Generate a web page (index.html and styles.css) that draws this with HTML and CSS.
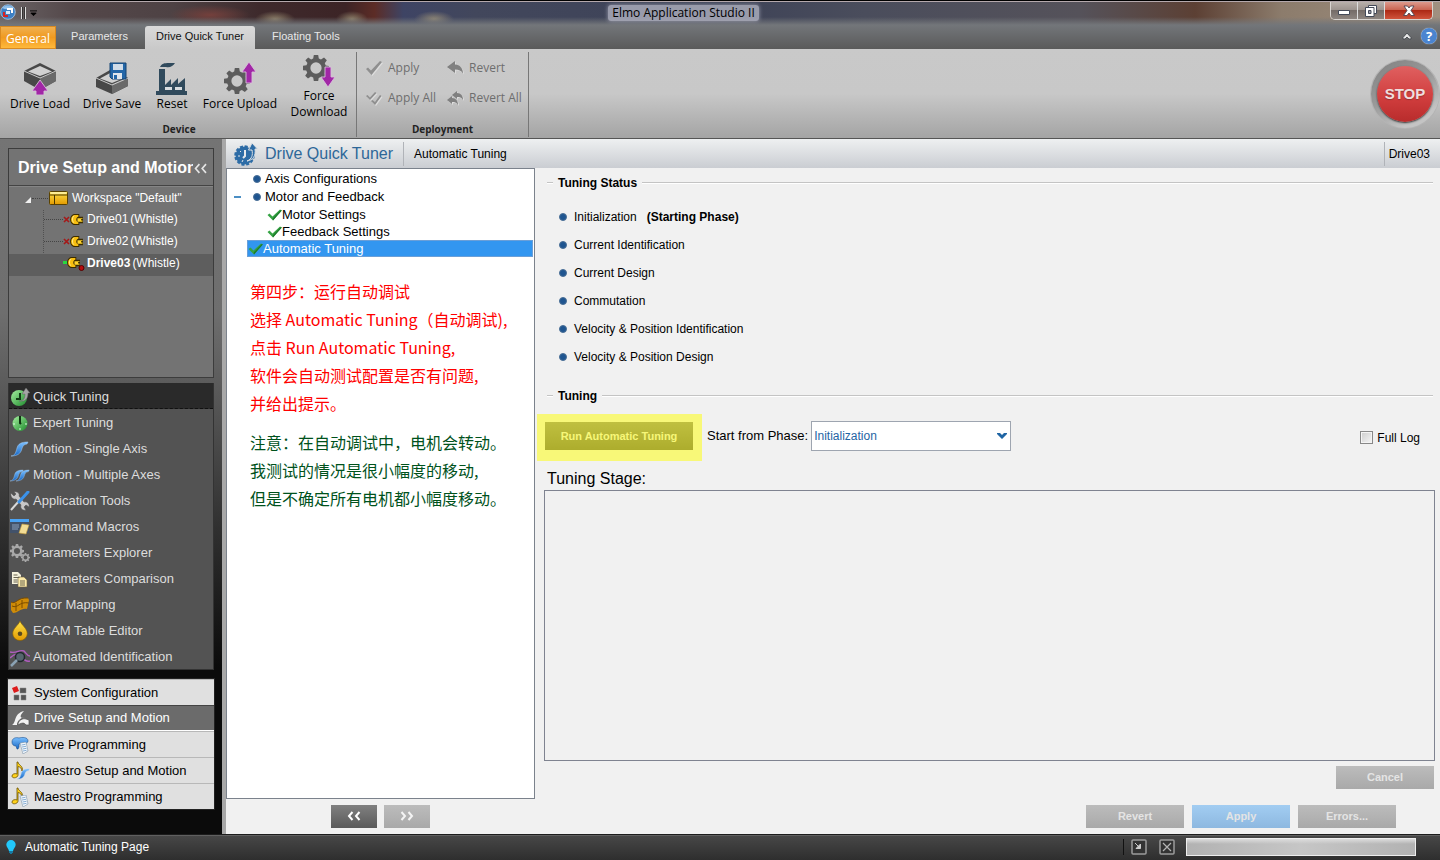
FILE: index.html
```html
<!DOCTYPE html>
<html lang="en">
<head>
<meta charset="utf-8">
<title>Elmo Application Studio II</title>
<link rel="stylesheet" href="styles.css">
</head>
<body>
<svg class="defs" aria-hidden="true">
  <defs>
    <linearGradient id="g-gold" x1="0" y1="0" x2="0" y2="1"><stop offset="0" stop-color="#ffe34a"/><stop offset="1" stop-color="#e39a00"/></linearGradient>
    <linearGradient id="g-green" x1="0" y1="0" x2="1" y2="1"><stop offset="0" stop-color="#a6f0a0"/><stop offset="1" stop-color="#1d8a2c"/></linearGradient>
    <linearGradient id="g-blue" x1="0" y1="0" x2="0" y2="1"><stop offset="0" stop-color="#7cc0ff"/><stop offset="1" stop-color="#1767c4"/></linearGradient>
    <symbol id="gear" viewBox="0 0 24 24">
      <path fill-rule="evenodd" d="M10 0h4l.6 3.200 2 .9L19.400 2.200l2.600 2.600-1.900 2.700.9 2.200 3 .5v4l-3.100.6-.9 2.100 1.900 2.600-2.700 2.700-2.700-1.900-2 .9L14 24h-4l-.6-3.200-2.100-.9-2.700 1.900-2.600-2.700 1.900-2.700-.9-2.100L0 14v-4l3.200-.5.9-2.200L2.200 4.800l2.600-2.600 2.700 1.900 1.900-.9zM12 6.800a5.200 5.200 0 1 0 0 10.400 5.200 5.200 0 0 0 0-10.400z"/>
    </symbol>
    <symbol id="tick" viewBox="0 0 15 13"><path d="M0.500 7L2.500 5.500 5.500 8.500 13 1.500 14.800 2.500 6 12.500z" fill="#35a343"/><path d="M6 12.500L14.800 2.500 13.800 2 5.700 10.500z" fill="#1c7c2c"/></symbol>
    <symbol id="plug" viewBox="0 0 15 12"><path d="M5 0h5v3h4v7h-4v2H5C2 12 0 9 0 6s2-6 5-6z" fill="#3c2c00"/><path d="M5.500 1H9v2C6 3.500 6 8.500 9 9v2H5.500C3 11 1 9 1 6s2-5 4.500-5z" fill="#f8bf10"/><path d="M4.500 2C2 3 2 8 4 9.500" fill="none" stroke="#fff0a0"/><path d="M8 4.500h5.500v1H12v1.500h1.500v1.500H8z" fill="#ffd42a"/></symbol>
    <symbol id="note" viewBox="0 0 20 20"><path d="M7 1l1 0c0 3 6 4 4 9-.2-3-2-4-4-4.500V14c0 3-6 4-6 1 0-2 3-3 5-2z" fill="#ffd21c" stroke="#6d5300" stroke-width=".8"/></symbol>
    <symbol id="sheet" viewBox="0 0 10 12"><path d="M1 1l6-1 2 9-5 3z" fill="#f4f8fc" stroke="#7c93aa" stroke-width=".6"/><path d="M2.500 3l4-.7M3 5l4-.7M3.500 7l4-.7M4 9l3.500-.7" stroke="#6c9bc9" stroke-width=".8"/></symbol>
    <symbol id="curve" viewBox="0 0 18 16"><path d="M0 15c4 0 5-4 6-8s4-6 11-6l-1 2c-4 .5-4.500 3-5.500 6S7 15 0 15z" fill="url(#g-blue)" stroke="#a8d0f8" stroke-width=".5"/></symbol>
  </defs>
</svg>

<header class="chrome">
  <div class="titlebar">
    <svg class="app-icon" viewBox="0 0 16 16"><circle cx="8" cy="8" r="7.300" fill="#3c7fc4" stroke="#b9d6f2" stroke-width=".7"/><path d="M2 4a7 5 0 0 1 12 0 8 4 0 0 1-12 0z" fill="#8fbfe9"/><path d="M7 4h6v5h-2V6H7z" fill="#fff"/><path d="M3 8h2v3h3v2H3z" fill="#d32424"/><path d="M6 7h4v3H6z" fill="#d6e7f7"/></svg>
    <span class="grip"></span>
    <svg class="quick-arrow" viewBox="0 0 8 7"><path d="M0 .5h8M1 3h6L4 6z" stroke="#000" stroke-width="1"/></svg>
    <h1 class="app-title">Elmo Application Studio II</h1>
    <div class="window-buttons">
      <button class="win" aria-label="Minimize"><svg viewBox="0 0 14 12"><path d="M1.500 5.500h11v4h-11z" fill="#fff" stroke="#444a58"/></svg></button>
      <button class="win" aria-label="Restore"><svg viewBox="0 0 14 12"><path d="M4.500.5h8v8h-8z" fill="#fff" stroke="#444a58"/><path d="M1.500 2.500h8.500v9H1.500z" fill="#fff" stroke="#444a58"/><path d="M4.500 5.500h2.500v3H4.500z" fill="#99a" stroke="#444a58"/></svg></button>
      <button class="win win-close" aria-label="Close"><svg viewBox="0 0 14 12"><path d="M2 1h3.500L7 3l1.500-2H12L9 5.500l3.500 5H9L7 8l-2 2.500H1.500l3.500-5z" fill="#fff" stroke="#4c4450" stroke-width=".9"/></svg></button>
    </div>
  </div>
  <nav class="tabs">
    <button class="tab tab-general">General</button>
    <button class="tab tab-params">Parameters</button>
    <button class="tab tab-active">Drive Quick Tuner</button>
    <button class="tab">Floating Tools</button>
    <div class="tabs-right">
      <button class="mini" aria-label="Collapse ribbon"><svg viewBox="0 0 10 8"><path d="M1 5.500L5 1l4 4.500v1.500H7L5 5 3 7H1z" fill="#e8e8e8" stroke="#44484e" stroke-width=".9"/></svg></button>
      <button class="help" aria-label="Help">?</button>
    </div>
  </nav>
</header>

<section class="ribbon">
  <div class="group">
    <div class="tools">
      <button class="tool">
        <svg viewBox="0 0 34 34"><path d="M1 10L17 2l16 8v10l-16 9L1 20z" fill="#484848"/><path d="M17 17l16-6v9l-16 9z" fill="#6a6a6a"/><path d="M5 10.500L17 5l12 5.500L17 15z" fill="#d0d0d0"/><path d="M1 10l16 7 16-7" fill="none" stroke="#e8e8e8" stroke-width=".8"/><path d="M17 19l8 11h-4v4h-8v-4H9z" fill="#a127a6" stroke="#d8c0da" stroke-width=".9"/></svg>
        <span>Drive Load</span></button>
      <button class="tool">
        <svg viewBox="0 0 34 34"><path d="M1 17L15 9l18 8v8l-16 8L1 26z" fill="#484848"/><path d="M17 23l16-7v9l-16 8z" fill="#6a6a6a"/><path d="M5 17.500L17 11l12 6-12 5z" fill="#d0d0d0"/><path d="M1 17l16 7 16-7" fill="none" stroke="#e8e8e8" stroke-width=".8"/><path d="M15 2h16v16H17l-2-2z" fill="#2467a8" stroke="#174572"/><path d="M18 3h10v6H18z" fill="#d0dce8"/><path d="M18 12h9v6h-9z" fill="#e0e6ec"/><path d="M19 14h3v4h-3z" fill="#2467a8"/></svg>
        <span>Drive Save</span></button>
      <button class="tool tool-s">
        <svg viewBox="0 0 34 34"><path d="M4 8h6v16l6-6v6l7-7v6l7-6v13h2v4H1v-4h3z" fill="#304a5c"/><path d="M5 6c2-5 7-4 15-4-2 3-5 5-9 4z" fill="#304a5c"/><path d="M10 26h7v3h-7zM20 26h7v3h-7z" fill="#d8dde0"/></svg>
        <span>Reset</span></button>
      <button class="tool tool-l">
        <svg viewBox="0 0 34 34"><use href="#gear" x="1" y="7" width="26" height="26" fill="#5c5c5c"/><path d="M26 1l7 10h-4v11h-6V11h-4z" fill="#a127a6" stroke="#d8c0da" stroke-width=".9"/></svg>
        <span>Force Upload</span></button>
      <button class="tool tool-tall">
        <svg viewBox="0 0 34 34"><use href="#gear" x="1" y="1" width="26" height="26" fill="#5c5c5c"/><path d="M26 33l-7-10h4V13h6v10h4z" fill="#a127a6" stroke="#d8c0da" stroke-width=".9"/></svg>
        <span>Force Download</span></button>
    </div>
    <h2 class="group-name">Device</h2>
  </div>
  <div class="group group-deploy">
    <div class="actions">
      <button class="action" disabled><svg viewBox="0 0 16 16"><path d="M0 9l2-1.500 3 3L14 1l2 1L5.500 15z" fill="#8f8f8f"/></svg>Apply</button>
      <button class="action" disabled><svg viewBox="0 0 16 16"><path d="M0 7l8-6v3.500c5 0 8 4 8 9-2-3-4-4-8-4V13z" fill="#808080"/></svg>Revert</button>
      <button class="action" disabled><svg viewBox="0 0 16 16"><path d="M0 6l1.500-1L4 7.500 9 2l1.500 1L4 10z" fill="#8f8f8f"/><path d="M5 11l1.500-1L9 12l5-7 1.500 1L9 15z" fill="#8f8f8f"/></svg>Apply All</button>
      <button class="action" disabled><svg viewBox="0 0 16 16"><path d="M5 5l5-4v2c4 0 6 3 6 7-2-3-3-3-6-3v2z" fill="#808080"/><path d="M0 10l5-4v2c4 0 6 3 6 7-2-3-3-3-6-3v2z" fill="#808080"/></svg>Revert All</button>
    </div>
    <h2 class="group-name">Deployment</h2>
  </div>
  <button class="stop"><span>STOP</span></button>
</section>

<main class="body">
  <aside class="sidebar">
    <section class="devices">
      <header class="devices-head"><h2>Drive Setup and Motion</h2>
        <button class="mini" aria-label="Collapse panel"><svg viewBox="0 0 13 10"><path d="M5.500 1L2 5l3.500 4M11.500 1L8 5l3.500 4" fill="none" stroke="#e4e4e4" stroke-width="1.500"/></svg></button></header>
      <ul class="tree">
        <li>
          <div class="node root"><svg class="expander" viewBox="0 0 6 6"><path d="M6 0v6H0z" fill="#f0f0f0"/></svg><i class="dots"></i>
            <svg class="folder" viewBox="0 0 19 14"><rect x=".5" y=".5" width="18" height="13" rx="1" fill="url(#g-gold)" stroke="#5a4200"/><path d="M1 4h17M5.500 4v9" stroke="#4a3600" stroke-width="1"/><path d="M1.500 2h16" stroke="#fff4b0" stroke-width="1.500"/></svg>Workspace "Default"</div>
          <ul>
            <li class="node leaf"><i class="dots"></i><svg class="drive" viewBox="0 0 22 16"><path d="M1 6l5 5M6 6l-5 5" stroke="#a61818" stroke-width="1.600"/><use href="#plug" x="7" y="3" width="14" height="11"/></svg><span>Drive01</span><span class="kind">(Whistle)</span></li>
            <li class="node leaf"><i class="dots"></i><svg class="drive" viewBox="0 0 22 16"><path d="M1 6l5 5M6 6l-5 5" stroke="#a61818" stroke-width="1.600"/><use href="#plug" x="7" y="3" width="14" height="11"/></svg><span>Drive02</span><span class="kind">(Whistle)</span></li>
            <li class="node leaf chosen"><svg class="drive" viewBox="0 0 22 16"><path d="M0 6h4v3H0z" fill="#28d840"/><use href="#plug" x="4" y="2" width="14" height="11"/><circle cx="18.500" cy="13" r="2.500" fill="#b80c0c" stroke="#500"/></svg><b>Drive03</b><span class="kind">(Whistle)</span></li>
          </ul>
        </li>
      </ul>
    </section>

    <nav class="tools-nav">
      <a href="#" class="on"><svg viewBox="0 0 20 20"><circle cx="9" cy="11" r="8" fill="url(#g-green)"/><path d="M10 6v6H6" stroke="#123d14" stroke-width="2" fill="none"/><path d="M9 14c5 0 6-3 6-7h-3l4-6 4 5h-2c0 6-3 9-9 8z" fill="#a5a5a5" stroke="#666" stroke-width=".5"/></svg>Quick Tuning</a>
      <a href="#"><svg viewBox="0 0 20 20"><circle cx="10" cy="10.500" r="7.500" fill="url(#g-green)"/><path d="M10 3v7l1 1" stroke="#0f3512" stroke-width="2" fill="none"/><path d="M3 11h2M15 11h2M10 15v2" stroke="#dfffe0"/></svg>Expert Tuning</a>
      <a href="#"><svg viewBox="0 0 20 20"><use href="#curve" x="1" y="2" width="18" height="16"/></svg>Motion - Single Axis</a>
      <a href="#"><svg viewBox="0 0 20 20"><use href="#curve" x="0" y="4" width="14" height="13"/><use href="#curve" x="6" y="4" width="14" height="13"/></svg>Motion - Multiple Axes</a>
      <a href="#"><svg viewBox="0 0 20 20"><path d="M1 2l3 3 2-2-2-2c4-1 6 2 5 4l5 6c3-1 6 2 5 5l-3-2-2 2 2 3c-4 1-6-2-5-5L6 8C3 9 0 6 1 2z" fill="#c8c8c8" stroke="#555" stroke-width=".6"/><path d="M1 19l8-9" stroke="#d8d8d8" stroke-width="2"/><path d="M9 11l9-10" stroke="#3b92ea" stroke-width="3" stroke-linecap="round"/></svg>Application Tools</a>
      <a href="#"><svg viewBox="0 0 20 20"><path d="M0 3h19v13H0z" fill="#42526a"/><path d="M0 2h19v3H0z" fill="#4aa3f4"/><path d="M2 8h7M2 10h7M2 12h6" stroke="#8ba0bc"/><path d="M12 7l7 1-3 9-7-1z" fill="#f2dc94" stroke="#c49a3c" stroke-width=".6"/></svg>Command Macros</a>
      <a href="#"><svg viewBox="0 0 20 20"><use href="#gear" x="0" y="1" width="14" height="14" fill="#a8a8a8"/><use href="#gear" x="11" y="10" width="9" height="9" fill="#a8a8a8"/></svg>Parameters Explorer</a>
      <a href="#"><svg viewBox="0 0 20 20"><path d="M2 3h6l3 3v9H2z" fill="#f6f2dc"/><path d="M8 8h6l3 3v7H8z" fill="#fbe9a8" stroke="#6b6040" stroke-width=".6"/><path d="M3.500 6h4M3.500 8.500h6M3.500 11h4M3.500 13h4M10 12h5M10 14h5M10 16h5" stroke="#6a6450"/></svg>Parameters Comparison</a>
      <a href="#"><svg viewBox="0 0 20 20"><path d="M1 7c5 3 6-5 17-4l1 2-2 9c-7-1-8 4-14 4l-2-3z" fill="#cf8c08"/><path d="M1 7c5 3 6-5 17-4M2 11c6 3 7-5 17-3M6 8v8M12 5v8" stroke="#7a4c00" fill="none"/></svg>Error Mapping</a>
      <a href="#"><svg viewBox="0 0 20 22"><path d="M10 0c2 5 8 8 8 14a8 7.500 0 0 1-16 0C2 8 8 5 10 0z" fill="url(#g-gold)" stroke="#8a6000" stroke-width=".7"/><circle cx="10" cy="14" r="2.500" fill="#5a4a20"/></svg>ECAM Table Editor</a>
      <a href="#"><svg viewBox="0 0 20 20"><path d="M0 5c7 2 9-3 14-1 2 2 3 5 6 5M0 11c5-5 9-5 12-1s5 5 8 4" stroke="#b05cc0" stroke-width="1.400" fill="none"/><circle cx="10" cy="10" r="4.500" fill="#56656e" stroke="#20282c" stroke-width="1.500"/><path d="M7 13l-6 6" stroke="#8ba2b4" stroke-width="2.500"/></svg>Automated Identification</a>
    </nav>

    <nav class="areas">
      <a href="#"><svg viewBox="0 0 20 20"><path d="M10 5h6v5h-6zM4 12h5v5H4zM11 12h5v5h-5z" fill="#555" stroke="#888" stroke-width=".5"/><path d="M2 5l5-2 2 5-5 2z" fill="#dd1c1c"/></svg>System Configuration</a>
      <a href="#" class="on"><svg viewBox="0 0 20 20"><path d="M2 17C7 14 3 6 14 3c-4 4-4 6-2 7l3-1c-5 1-8 4-8 8z" fill="#f2f2f2"/><path d="M8 17c0-5 5-7 8-6l3 1v5h-3c-2-3-5-2-8 0z" fill="#f2f2f2" stroke="#555" stroke-width=".7"/></svg>Drive Setup and Motion</a>
      <a href="#"><svg viewBox="0 0 20 20"><path d="M2 7c0-4 4-5 7-4 3-1 9-1 9 3 0 2-3 3-5 2L9 9v3l-1 2H7l-1-3C3 11 2 9 2 7z" fill="url(#g-blue)" stroke="#174f90" stroke-width=".6"/><use href="#sheet" x="9" y="7" width="10" height="12"/></svg>Drive Programming</a>
      <a href="#"><svg viewBox="0 0 20 20"><use href="#note" width="20" height="20"/><use href="#curve" x="7" y="7" width="13" height="12"/></svg>Maestro Setup and Motion</a>
      <a href="#"><svg viewBox="0 0 20 20"><use href="#note" width="20" height="20"/><use href="#sheet" x="9" y="8" width="10" height="12"/></svg>Maestro Programming</a>
    </nav>
  </aside>

  <section class="page">
    <header class="page-head">
      <svg class="page-icon" viewBox="0 0 24 24"><circle cx="10.500" cy="13.500" r="9" fill="#2d6ca6"/><circle cx="10.500" cy="13.500" r="9" fill="none" stroke="#2d6ca6" stroke-width="2.500" stroke-dasharray="3 1.700"/><path d="M11 8v6l-2 2" stroke="#e4e8ec" stroke-width="2" fill="none"/><path d="M4 14h2M8 20l1-2M6 9l1 1" stroke="#e4e8ec"/><path d="M13 19c5-2 6-6 5-11h-3.500L18 1l5.500 6H21c1 7-2 11-8 12z" fill="#2d6ca6" stroke="#dde0e4" stroke-width="1"/></svg>
      <h2>Drive Quick Tuner</h2>
      <span class="crumb">Automatic Tuning</span>
      <span class="target">Drive03</span>
    </header>
    <div class="columns">
      <div class="steps-col">
        <div class="steps">
          <ul class="step-tree">
            <li class="step"><i class="bullet"></i>Axis Configurations</li>
            <li class="step open"><i class="bullet"></i>Motor and Feedback</li>
            <li class="step sub"><svg viewBox="0 0 15 13"><use href="#tick"/></svg>Motor Settings</li>
            <li class="step sub"><svg viewBox="0 0 15 13"><use href="#tick"/></svg>Feedback Settings</li>
            <li class="step current"><svg viewBox="0 0 15 13"><use href="#tick"/></svg>Automatic Tuning</li>
          </ul>
          <div class="notes" lang="zh-CN">
            <p class="note-red">第四步：运行自动调试<br>选择 Automatic Tuning（自动调试),<br>点击 Run Automatic Tuning,<br>软件会自动测试配置是否有问题,<br>并给出提示。</p>
            <p class="note-green">注意：在自动调试中，电机会转动。<br>我测试的情况是很小幅度的移动,<br>但是不确定所有电机都小幅度移动。</p>
          </div>
        </div>
        <div class="pager">
          <button class="btn btn-dark" aria-label="Previous step"><svg viewBox="0 0 14 10"><path d="M5.500 1L2 5l3.500 4M12.500 1L9 5l3.500 4" fill="none" stroke="#fff" stroke-width="2"/></svg></button>
          <button class="btn" aria-label="Next step" disabled><svg viewBox="0 0 14 10"><path d="M1.500 1L5 5 1.500 9M8.500 1L12 5 8.500 9" fill="none" stroke="#f4f4f4" stroke-width="2"/></svg></button>
        </div>
      </div>
      <div class="work">
        <h3 class="rule">Tuning Status</h3>
        <ul class="phases">
          <li><i class="bullet"></i>Initialization <b>(Starting Phase)</b></li>
          <li><i class="bullet"></i>Current Identification</li>
          <li><i class="bullet"></i>Current Design</li>
          <li><i class="bullet"></i>Commutation</li>
          <li><i class="bullet"></i>Velocity &amp; Position Identification</li>
          <li><i class="bullet"></i>Velocity &amp; Position Design</li>
        </ul>
        <h3 class="rule">Tuning</h3>
        <div class="run-row">
          <span class="marked"><button class="btn btn-dark btn-run">Run Automatic Tuning</button></span>
          <label for="phase">Start from Phase:</label>
          <span class="select"><select id="phase"><option>Initialization</option></select><svg viewBox="0 0 10 6"><path d="M0 0h3l2 2 2-2h3v1L5 6 0 1z" fill="#1f65a4"/></svg></span>
          <label class="full-log"><input type="checkbox">Full Log</label>
        </div>
        <h3 class="stage-title" id="stage">Tuning Stage:</h3>
        <div class="stage" role="log" aria-labelledby="stage"></div>
        <div class="cancel-row"><button class="btn" disabled>Cancel</button></div>
        <div class="foot-row">
          <button class="btn" disabled>Revert</button>
          <button class="btn btn-blue" disabled>Apply</button>
          <button class="btn" disabled>Errors...</button>
        </div>
      </div>
    </div>
  </section>
</main>

<footer class="status">
  <svg class="bulb" viewBox="0 0 10 14"><path d="M5 0a4.700 4.700 0 0 1 4.700 4.700C9.700 7 7.500 8.500 7 11H3C2.500 8.500.3 7 .3 4.700A4.700 4.700 0 0 1 5 0z" fill="#22c8fa"/><path d="M3 11h4v2H6v1H4v-1H3z" fill="#1878a0"/></svg>
  <span class="status-text">Automatic Tuning Page</span>
  <button class="mini" aria-label="Pop out"><svg viewBox="0 0 16 16"><rect x="1" y="1" width="14" height="14" rx="1" fill="#333" stroke="#9c9c9c" stroke-width="1.500"/><path d="M4 4l4 4M9.500 5v4.500H5z" stroke="#ccc" fill="#ccc"/></svg></button>
  <button class="mini" aria-label="Clear"><svg viewBox="0 0 16 16"><rect x="1" y="1" width="14" height="14" rx="1" fill="#333" stroke="#9c9c9c" stroke-width="1.500"/><path d="M4 4l8 8M12 4l-8 8" stroke="#b4b4b4" stroke-width="1.200"/></svg></button>
  <div class="progress" role="progressbar" aria-label="Progress"></div>
</footer>
</body>
</html>
```

FILE: styles.css
```css
* { box-sizing: border-box; }
body { margin: 0; min-height: 100vh; display: flex; flex-direction: column; font: 12px/16px "Liberation Sans", Arial, sans-serif; color: #000; background: #f1f1f1; }
h1, h2, h3, p, ul { margin: 0; padding: 0; font-weight: normal; }
ul { list-style: none; }
button { font: inherit; color: inherit; border: 0; padding: 0; background: none; }
a { color: inherit; text-decoration: none; }
svg { flex: none; display: block; }
.defs { position: absolute; width: 0; height: 0; }

/* Window frame */
.chrome {
  border-top: 1px solid #000;
  background:
    linear-gradient(#0000 0, #0000 16px, #73767a 24px, #5a5a5a 100%),
    radial-gradient(20px 8px at 275px 18px, #8a7c66, #0000),
    radial-gradient(16px 8px at 352px 18px, #8a7c66, #0000),
    radial-gradient(20px 8px at 434px 18px, #8c8474, #0000),
    radial-gradient(40px 10px at 210px 14px, #74403c, #0000),
    linear-gradient(90deg, #6a6466 0, #54484a 5%, #4e4244 12%, #3e2a2c 18%, #3c2426 24%, #5c2c26 26%, #3e4464 28%, #42475c 33%, #3d4257 50%, #4a4d5c 60%, #55525a 75%, #5c4034 83%, #8c7c6c 89%, #a09080 100%);
}
.titlebar { height: 24px; display: flex; align-items: flex-start; border-top: 1px solid #b4a8ac; padding-right: 7px; }
.app-icon { width: 16px; height: 16px; margin-top: 2px; }
.grip { width: 5px; height: 12px; margin: 5px 4px 0 5px; border: solid #ddd; border-width: 0 1px; background: linear-gradient(90deg, #333 1px, #0000 1px, #0000 2px, #333 2px); }
.quick-arrow { width: 7px; height: 7px; margin-top: 8px; }
.app-title { margin: 3px auto 0; padding: 0 4px; font: 12px/16px "Open Sans", "Noto Sans", sans-serif; border-radius: 3px; background: rgba(176, 178, 192, .8); box-shadow: 0 0 4px rgba(176, 178, 192, .8); }
.window-buttons { display: flex; border: 1px solid #d8d4d0; border-top: 0; border-radius: 0 0 5px 5px; overflow: hidden; }
.win { width: 27px; height: 17px; display: grid; place-items: center; border-right: 1px solid #ddd; background: linear-gradient(#b8b0aa, #9a918c 50%, #756c68 50%, #8d8580); }
.win svg { width: 14px; height: 12px; }
.win-close { width: 47px; border: 0; background: linear-gradient(#dd9a8c, #c8604c 50%, #ad2a16 50%, #d0543c); }
.tabs { height: 24px; display: flex; align-items: flex-end; }
.tab { height: 23px; padding: 0 17px; color: #e8e8e8; font-size: 11px; line-height: 20px; padding-bottom: 3px; }
.tab-general { width: 56px; padding: 3px 0 0; color: #fff; font: 12px/18px "Open Sans", "Noto Sans", sans-serif; border: 1px solid #d98a20; background: linear-gradient(#f0b050, #f09a20 50%, #ffb93c); }
.tab-params { width: 89px; padding-left: 0; padding-right: 2px; }
.tab-active { width: 110px; padding-left: 0; padding-right: 0; color: #111; border-radius: 3px 3px 0 0; background: linear-gradient(#dadada, #c9c9c9); }
.tabs-right { margin-left: auto; align-self: stretch; display: flex; align-items: center; gap: 9px; padding: 0 3px 3px 0; }
.tabs-right .mini svg { width: 10px; height: 8px; }
.help { width: 16px; height: 16px; border-radius: 50%; color: #fff; font: bold 13px/16px "Open Sans", sans-serif; background: #4a84d0; box-shadow: 0 0 1px #fff; text-align: center; }

/* Ribbon */
.ribbon { display: flex; height: 90px; border-bottom: 1px solid #555; background: linear-gradient(#c9c9c9 0, #c8c8c8 50%, #a4a4a4 100%); font-family: "Open Sans", "Noto Sans", sans-serif; }
.group { display: flex; flex-direction: column; justify-content: space-between; padding: 0 2px 1px 4px; border-right: 1px solid #777; margin: 3px 0 1px; }
.tools { display: flex; align-items: flex-start; margin-top: 2px; }
.tool { width: 72px; padding-top: 7px; line-height: 16px; display: flex; flex-direction: column; align-items: center; }
.tool svg { width: 34px; height: 34px; margin-bottom: 1px; }
.tool-s { width: 48px; }
.tool-l { width: 88px; }
.tool-tall { width: 70px; padding-top: 0; }
.tool-tall svg { margin-bottom: 0; }
.group-name { font-size: 10px; line-height: 14px; font-weight: bold; text-align: center; color: #222; }
.group .tools + .group-name { margin-top: -9px; }
.group-deploy { padding: 0 0 1px; width: 172px; }
.actions { display: grid; grid-template-columns: 81px 1fr; grid-auto-rows: 30px; padding-left: 9px; margin-top: 1px; }
.action { display: flex; align-items: center; gap: 6px; color: #6e6e6e; white-space: nowrap; }
.action svg { width: 16px; height: 16px; filter: drop-shadow(1px 1px 0 #ddd); }
.stop { width: 68px; height: 68px; margin: 11px 1px 0 auto; padding: 6px; border-radius: 50%; background: linear-gradient(150deg, #808080, #9a9a9a 45%, #c4c4c4 80%); box-shadow: 0 0 0 1px #b4b4b4; }
.stop span { display: block; border-radius: 50%; height: 56px; color: #f0dede; font: bold 15px/56px "Liberation Sans", Arial, sans-serif; background: linear-gradient(#e06060, #cf3c3c 60%, #b82c2c); box-shadow: 0 1px 2px #333; text-shadow: 0 1px 1px #933; }

/* Sidebar */
.body { flex: 1; display: flex; }
.sidebar { width: 226px; flex: none; padding: 9px 8px 25px; border-right: 4px solid #a8a8a8; display: flex; flex-direction: column; background: linear-gradient(#747474 0, #6e6e6e 25%, #5c5c5c 35%, #303030 56%, #0b0b0b 76%, #0b0b0b 100%); }
.devices { flex: 1; border: 1px solid #3c3c3c; background: #737373; margin-bottom: 5px; color: #fff; min-height: 130px; }
.devices-head { display: flex; align-items: center; height: 37px; border-bottom: 1px solid #444; box-shadow: 0 1px #858585; padding: 2px 5px 0 9px; }
.devices-head h2 { font: bold 16px/24px "Liberation Sans", Arial, sans-serif; flex: 1; overflow: hidden; white-space: nowrap; }
.devices-head .mini svg { width: 15px; height: 11px; }
.tree { padding-top: 2px; }
.tree ul { background: repeating-linear-gradient(#505050 0 1px, #0000 1px 2px) 34px 0 / 1px 44px no-repeat; }
.node { height: 22px; display: flex; align-items: center; padding-bottom: 2px; white-space: nowrap; }
.root { padding-left: 16px; gap: 1px; }
.expander { width: 6px; height: 6px; margin-top: 4px; }
.dots { width: 16px; border-top: 1px dotted #444; }
.folder { width: 19px; height: 14px; margin-right: 3px; }
.leaf { padding-left: 35px; padding-bottom: 4px; }
.leaf .dots { width: 19px; }
.drive { width: 22px; height: 16px; margin-right: 2px; }
.chosen { background: #5e5e5e; padding-left: 54px; }
.kind { margin-left: 2px; }
.tools-nav { border: 1px solid #333; border-top: 0; background: #535353; color: #ddd; }
.tools-nav a, .areas a { display: flex; align-items: center; height: 26px; gap: 4px; font-size: 13px; }
.tools-nav a { gap: 3px; padding: 2px 0 0 1px; }
.tools-nav .on { background: #2a2a2a; border-bottom: 1px dashed #111; }
.tools-nav svg, .areas svg { width: 20px; height: 20px; }
.areas { margin-top: 9px; background: #e0e0e0; outline: 1px solid #222; }
.areas a { padding-left: 2px; border-top: 1px solid #b8b8b8; }
.areas .on { background: #6b6b6b; color: #fff; border-top-color: #444; border-bottom: 1px solid #fff; }

/* Page */
.page { flex: 1; min-width: 0; display: flex; flex-direction: column; }
.page-head { height: 29px; display: flex; align-items: center; padding: 0 10px 0 8px; background: linear-gradient(#eef0f1, #cacdd2); }
.page-icon { width: 24px; height: 24px; margin-right: 7px; }
.page-head h2 { font-size: 16px; line-height: 24px; color: #2d6798; padding-right: 10px; }
.crumb, .target { line-height: 24px; border-left: 1px solid #b0b3b8; padding-left: 10px; }
.target { margin-left: auto; padding-left: 4px; }
.columns { flex: 1; display: flex; }
.steps-col { width: 309px; flex: none; display: flex; flex-direction: column; }
.steps { flex: 1; border: 1px solid #7b828c; background: #fff; padding-top: 1px; }
.step { display: flex; align-items: center; height: 18px; font-size: 13px; padding-left: 26px; position: relative; }
.bullet { width: 8px; height: 8px; border-radius: 50%; background: #1f5590; border: 1px solid #4a6f96; flex: none; }
.step .bullet { margin-right: 4px; }
.step.open::before { content: ""; position: absolute; left: 7px; top: 8px; width: 7px; height: 2px; background: #4c8fc4; }
.step svg { width: 15px; height: 13px; }
.step.sub { height: 17px; padding-left: 40px; }
.step.current { height: 17px; margin: 0 1px 0 20px; padding-left: 0; color: #fff; background: #3296f0; border: 1px solid #6a9fd8; }
.notes { font: 500 16px/28px "Noto Sans CJK SC", sans-serif; padding: 20px 0 0 23px; white-space: nowrap; }
.note-red { color: #f00; }
.note-green { color: #00521c; margin-top: 11px; }
.pager { display: flex; gap: 7px; padding: 6px 0 6px 105px; }
.btn { width: 98px; height: 23px; padding-bottom: 1px; font-size: 11px; font-weight: bold; color: #e4e4e4; background: linear-gradient(#bcbcbc, #a9a9a9); display: grid; place-items: center; }
.btn-dark { background: linear-gradient(#808080, #5a5a5a); }
.btn-blue { background: linear-gradient(#a2cdf2, #8db8e0); }
.pager .btn { width: 46px; }
.pager svg { width: 14px; height: 10px; }
.work { flex: 1; min-width: 0; display: flex; flex-direction: column; padding: 7px 5px 6px 9px; }
.rule { display: flex; align-items: center; gap: 5px; font-size: 12px; font-weight: bold; margin: 0 2px 0 3px; line-height: 16px; }
.rule::before, .rule::after { content: ""; height: 2px; width: 6px; background: linear-gradient(#c4c4c4 50%, #fff 50%); }
.rule::after { flex: 1; }
.phases { padding: 12px 0 17px 15px; }
.phases li { height: 28px; display: flex; align-items: center; }
.phases .bullet { margin-right: 7px; }
.phases b { margin-left: 10px; }
.run-row { display: flex; align-items: center; margin-top: 17px; padding-left: 1px; font-size: 13px; }
.marked { position: relative; margin-right: 14px; }
.marked::after { content: ""; position: absolute; inset: -8px -9px -11px -8px; background: rgba(255, 255, 0, .5); pointer-events: none; }
.btn-run { width: 148px; height: 28px; color: #eee; }
.select { position: relative; margin-left: 3px; width: 200px; }
.select select { appearance: none; width: 100%; height: 30px; border: 1px solid #9ea5b0; border-radius: 0; background: #fff; color: #1f65a4; font: 12px "Liberation Sans", Arial, sans-serif; padding: 0 20px 0 2px; }
.select svg { position: absolute; right: 4px; top: 12px; width: 10px; height: 6px; pointer-events: none; }
.full-log { margin-left: auto; margin-right: 15px; padding-top: 3px; display: flex; align-items: center; gap: 4px; font-size: 12px; }
.full-log input { appearance: none; width: 13px; height: 13px; margin: 0; border: 1px solid #888; background: linear-gradient(135deg, #ccc, #f6f6f6); box-shadow: inset 0 0 0 1px #f4f4f4; }
.stage-title { font-size: 16px; line-height: 20px; margin: 18px 0 1px 3px; }
.stage { flex: 1; border: 1px solid #7f8390; min-height: 80px; }
.cancel-row { display: flex; justify-content: flex-end; padding: 5px 1px 16px 0; }
.foot-row { display: flex; justify-content: flex-end; gap: 8px; padding-right: 39px; }

/* Status bar */
.status { height: 26px; display: flex; align-items: center; padding: 0 24px 1px 6px; color: #fff; border-top: 1px solid #1c1c1c; box-shadow: inset 0 1px #606060; background: linear-gradient(#484848, #2e2e2e); }
.bulb { width: 10px; height: 14px; margin-right: 9px; }
.status-text { flex: 1; }
.status .mini { margin-left: 12px; }
.status .mini svg { width: 16px; height: 16px; }
.status-text + .mini { margin-left: 0; padding-left: 7px; border-left: 1px solid #111; }
.progress { width: 230px; height: 18px; margin-left: 11px; border: 1px solid #eee; background: linear-gradient(#dcdcdc, #0000 5px), linear-gradient(90deg, #b2b2b2, #c6c6c6 50%, #b2b2b2); }
```
